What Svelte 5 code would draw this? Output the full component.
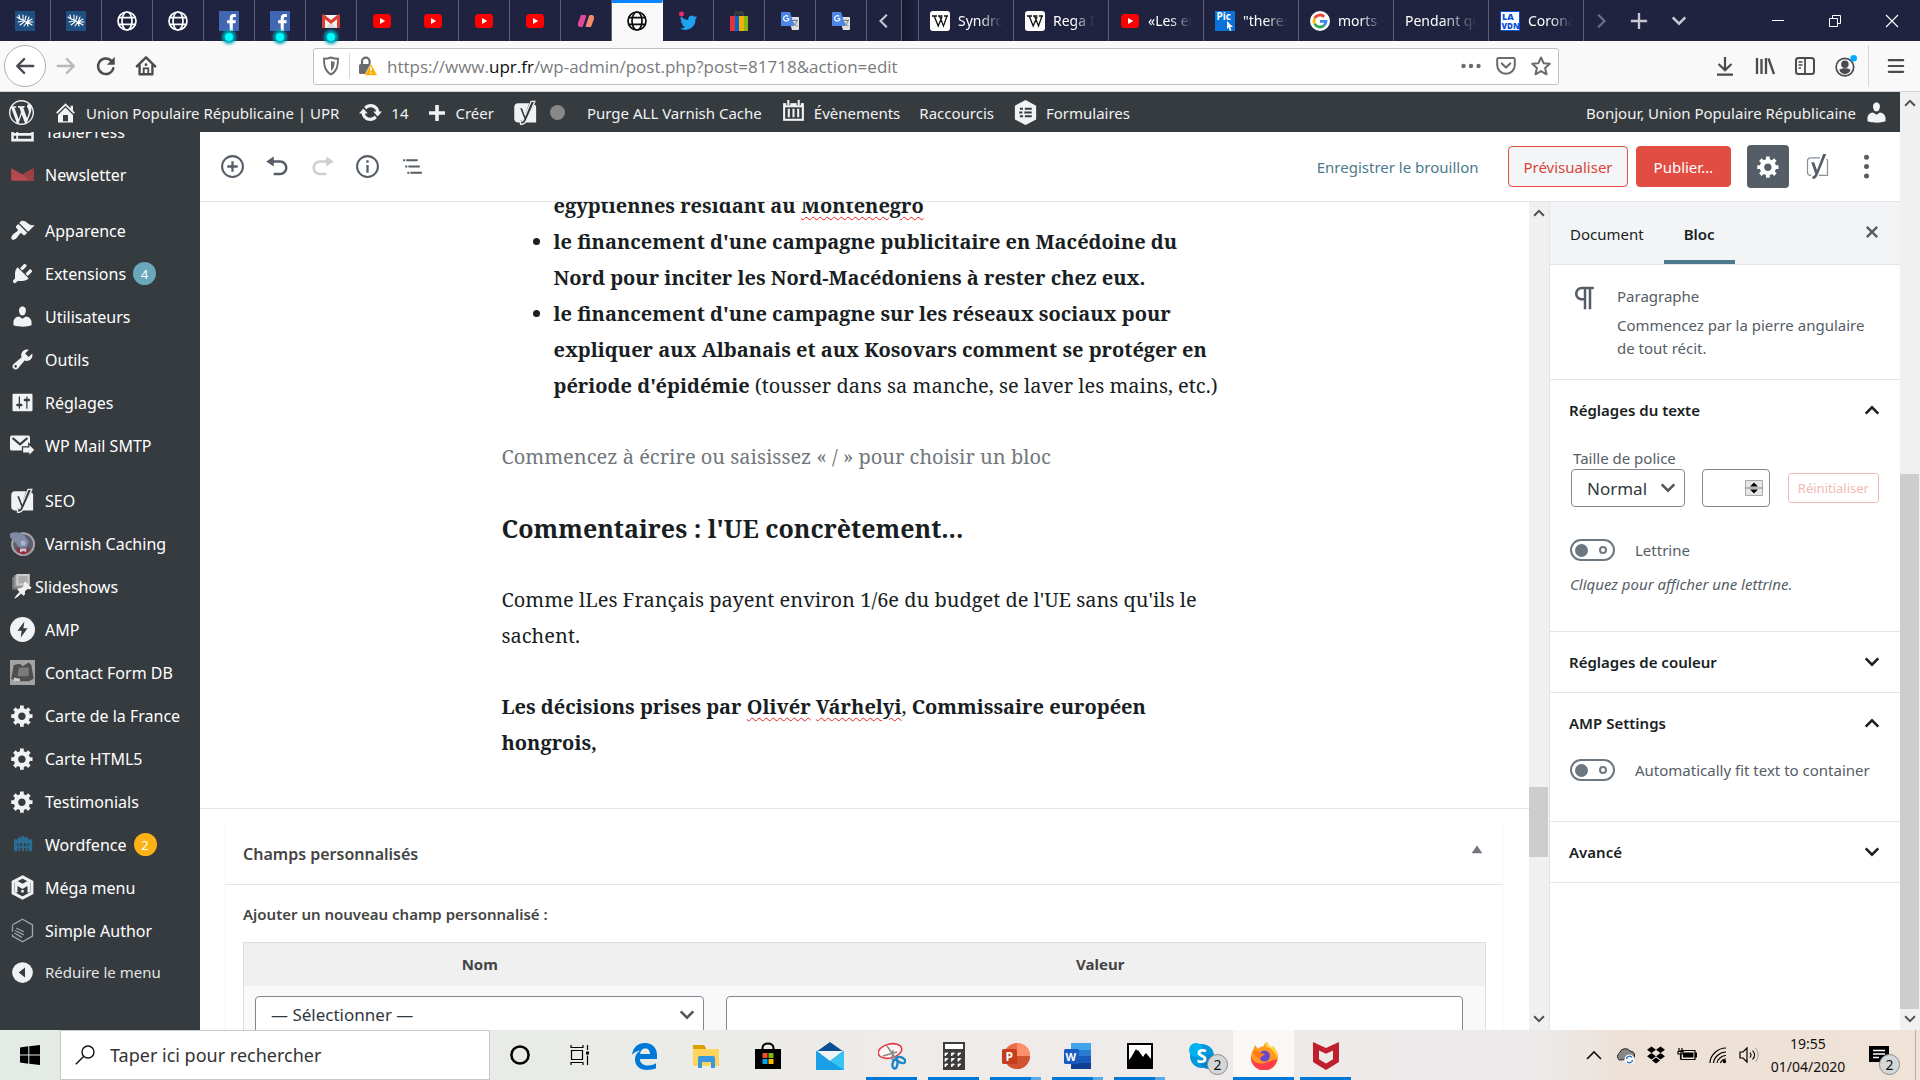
<script lang="ts">
  type Tab = { icon: string; title?: string; dot?: boolean };
  type MenuItem = { label: string; icon: string; count?: number; tone?: string; tight?: boolean };

  const pinnedTabs: Tab[] = [
    { icon: 'upr' },
    { icon: 'upr' },
    { icon: 'globe' },
    { icon: 'globe' },
    { icon: 'facebook', dot: true },
    { icon: 'facebook', dot: true },
    { icon: 'gmail', dot: true },
    { icon: 'youtube' },
    { icon: 'youtube' },
    { icon: 'youtube' },
    { icon: 'youtube' },
    { icon: 'ribbon' },
    { icon: 'globe' },
    { icon: 'twitter' },
    { icon: 'gift' },
    { icon: 'translate' },
    { icon: 'translate' }
  ];
  const activeTab = 12;

  const openTabs: Tab[] = [
    { icon: 'wikipedia', title: 'Syndro' },
    { icon: 'wikipedia', title: 'Rega I' },
    { icon: 'youtube', title: '«Les eu' },
    { icon: 'pic', title: '"theres' },
    { icon: 'google', title: 'morts c' },
    { icon: '', title: 'Pendant qu' },
    { icon: 'vdn', title: 'Corona' }
  ];

  const menuGroups: MenuItem[][] = [
    [
      { label: 'TablePress', icon: 'tablepress' },
      { label: 'Newsletter', icon: 'newsletter' }
    ],
    [
      { label: 'Apparence', icon: 'brush' },
      { label: 'Extensions', icon: 'plug', count: 4, tone: 'blue' },
      { label: 'Utilisateurs', icon: 'user' },
      { label: 'Outils', icon: 'wrench' },
      { label: 'Réglages', icon: 'sliders' },
      { label: 'WP Mail SMTP', icon: 'mailsmtp' }
    ],
    [
      { label: 'SEO', icon: 'yoast' },
      { label: 'Varnish Caching', icon: 'varnish' },
      { label: 'Slideshows', icon: 'slides', tight: true },
      { label: 'AMP', icon: 'amp' },
      { label: 'Contact Form DB', icon: 'cfdb' },
      { label: 'Carte de la France', icon: 'gear' },
      { label: 'Carte HTML5', icon: 'gear' },
      { label: 'Testimonials', icon: 'gear' },
      { label: 'Wordfence', icon: 'wordfence', count: 2, tone: 'orange' },
      { label: 'Méga menu', icon: 'mega' },
      { label: 'Simple Author', icon: 'author' }
    ]
  ];

  const apps = [
    { icon: 'edge', name: 'Edge' },
    { icon: 'folder', name: 'Explorateur' },
    { icon: 'store', name: 'Store' },
    { icon: 'mail', name: 'Courrier' },
    { icon: 'snip', name: 'Capture', state: 'open' },
    { icon: 'calc', name: 'Calculatrice', state: 'open' },
    { icon: 'ppt', name: 'PowerPoint', state: 'multi' },
    { icon: 'word', name: 'Word', state: 'multi' },
    { icon: 'photos', name: 'Photos', state: 'multi' },
    { icon: 'skype', name: 'Skype', badge: 2 },
    { icon: 'firefox', name: 'Firefox', state: 'focus' },
    { icon: 'mcafee', name: 'McAfee', state: 'open' }
  ];

  let dropCap = $state(false);
  let fitText = $state(false);
  let search = $state('');

  // viewBox first, then the shapes
  const icons: Record<string, [string, string]> = {
    upr: ['0 0 20 20', '<path fill="#1e4f80" d="M0 0h20v20H0z"/><path d="M2 6l3 2M4 4l1 4 3 1M3 11l5-1M8 4l0 5 3 2M5 14l4-3M11 5l-1 4M14 6l-2 5M17 8l-5 3M9 15l3-4M13 15l-1-4M17 14l-5-3M18 11l-6 0" stroke="#fff" stroke-width="1.1" stroke-linecap="round" fill="none"/>'],
    globe: ['0 0 20 20', '<g fill="none" stroke="currentColor" stroke-width="1.7"><circle cx="10" cy="10" r="9"/><ellipse cx="10" cy="10" rx="5" ry="9"/><path d="M1.5 6.6h17M1.5 13.4h17"/></g>'],
    facebook: ['0 0 20 20', '<path fill="#4267b2" d="M0 0h20v20H0z"/><path fill="#fff" d="M13.800 20v-7.700h2.600l.4-3h-3V7.400c0-.9.3-1.500 1.500-1.500h1.600V3.200c-.3 0-1.200-.1-2.300-.1-2.300 0-3.900 1.400-3.900 4v2.200H8.100v3h2.600V20z"/>'],
    gmail: ['0 0 20 20', '<path fill="#f2f2f2" d="M2 4h16v13H2z"/><path fill="#d9d9d9" d="M5 17l5-6 5 6z"/><path fill="#d93f35" d="M1 4.500C1 3.500 2 3 3 3.600l7 5.400 7-5.400c1-.6 2-.1 2 .9V17h-3V8.300L10 13 4 8.300V17H1z"/>'],
    youtube: ['0 0 20 20', '<rect x="1" y="3" width="18" height="14" rx="3.5" fill="#f00"/><path fill="#fff" d="M8 7l5.200 3L8 13z"/>'],
    ribbon: ['0 0 20 20', '<path fill="#e0489b" d="M5 4h4c1.500 0 1.500 1 1 2L7 15c-.4 1-1 1-2 1-3 0-3.500-2-2.800-4.500z"/><path fill="#f58a6d" d="M15 16h-4c-1.500 0-1.500-1-1-2l3-9c.4-1 1-1 2-1 3 0 3.500 2 2.800 4.500z"/>'],
    twitter: ['0 0 20 20', '<path fill="#1da1f2" d="M19 6a7 7 0 0 1-1.800.6A3.400 3.400 0 0 0 18.500 5a7 7 0 0 1-2.200.8 3.500 3.500 0 0 0-6 3.200A10 10 0 0 1 3.200 5.500a3.500 3.500 0 0 0 1 4.700 3.500 3.500 0 0 1-1.500-.4c0 1.700 1.200 3.100 2.800 3.500-.5.1-1 .1-1.500 0 .4 1.400 1.700 2.400 3.200 2.400A7 7 0 0 1 2 17.200 10 10 0 0 0 17.400 8.200 7 7 0 0 0 19 6z"/><circle cx="3.500" cy="3" r="2.5" fill="#f0286a"/>'],
    gift: ['0 0 20 20', '<path d="M6 5c0-5 3-5 4-1 1-4 4-4 4 1" fill="none" stroke="#3d3d3d" stroke-width="2.4"/><path fill="#e53238" d="M1 5h5v15H1z"/><path fill="#0064d2" d="M6 5h4v15H6z"/><path fill="#f5af02" d="M10 5h5v15h-5z"/><path fill="#86b817" d="M15 5h4v15h-4z"/>'],
    translate: ['0 0 20 20', '<path fill="#e0e0e0" d="M8 6h10c.6 0 1 .4 1 1v11c0 .6-.4 1-1 1h-6z"/><path fill="#4a86e8" d="M2 1h8l4.500 14H2c-.6 0-1-.4-1-1V2c0-.6.4-1 1-1z"/><path d="M9 7.500H6.500M9 7.500a2.700 2.700 0 1 1-.8-2" stroke="#fff" stroke-width="1.2" fill="none"/><path d="M12 9.500h6M15 8.500v1M13 15c2-1 3.500-3 4-5.500M13.500 11c.7 2 2 3.500 4 4" stroke="#6b7f86" fill="none"/>'],
    wikipedia: ['0 0 20 20', '<rect width="20" height="20" rx="3" fill="#fff"/><path d="M2 5h5M8 5h4.500M14 5h4M4.200 5l4 10L12 6M9.500 5l4 10L17 5" stroke="#111" stroke-width="1.3" fill="none"/>'],
    pic: ['0 0 20 20', '<path fill="#0a73d9" d="M0 0h20v20H0z"/><text x="1.5" y="9" font-size="10" font-weight="700" font-family="Open Sans" fill="#fff">Pic</text><path fill="#fff" d="M12 10l6 6h-3l1.500 3.300-1.500.7-1.500-3.400L12 18z"/>'],
    google: ['0 0 20 20', '<circle cx="10" cy="10" r="10" fill="#fff"/><g fill="none" stroke-width="2.8"><path stroke="#ea4335" d="M14.200 5.700A6 6 0 0 0 4.700 7.200"/><path stroke="#fbbc05" d="M4.700 7.200a6 6 0 0 0 0 5.600"/><path stroke="#34a853" d="M4.700 12.800a6 6 0 0 0 9.100 1.800"/><path stroke="#4285f4" d="M13.800 14.600A6 6 0 0 0 16 10.300h-6"/></g>'],
    vdn: ['0 0 20 20', '<path fill="#0b50d8" d="M0 0h20v20H0z"/><path fill="#fff" d="M1 1h18v18H1z"/><g font-family="Open Sans" font-weight="800" fill="#0b50d8"><text x="2" y="9" font-size="9">LA</text><text x="1.5" y="18" font-size="8">VDN</text></g>'],

    back: ['0 0 24 24', '<path d="M21 12H4M11 4.500L3.500 12l7.500 7.500" fill="none" stroke="currentColor" stroke-width="2.6" stroke-linecap="round" stroke-linejoin="round"/>'],
    forward: ['0 0 24 24', '<path d="M3 12h17M13 4.500l7.500 7.500-7.500 7.500" fill="none" stroke="currentColor" stroke-width="2.6" stroke-linecap="round" stroke-linejoin="round"/>'],
    reload: ['0 0 24 24', '<path d="M20 14.500a8.500 8.500 0 1 1-2.500-8.500L20 8.500" fill="none" stroke="currentColor" stroke-width="2.7" stroke-linecap="round"/><path fill="currentColor" d="M21.500 2v8.500H13z"/>'],
    home: ['0 0 24 24', '<path d="M2 12.500L12 2.500l10 10M5 11v10h14V11" fill="none" stroke="currentColor" stroke-width="2.6" stroke-linecap="round" stroke-linejoin="round"/><path d="M9.500 21v-6.500h5V21" fill="none" stroke="currentColor" stroke-width="2"/><circle cx="12" cy="10.500" r="1.5" fill="currentColor"/>'],
    shield: ['0 0 20 20', '<path d="M10 1.500c2.500 1 4.500 1.300 7 1.300 0 7-.8 12-7 15.700C3.800 14.800 3 9.800 3 2.800c2.500 0 4.500-.3 7-1.300z" fill="none" stroke="currentColor" stroke-width="1.9"/><path d="M10 5v10c2.800-2.300 3.600-5 3.700-9.200-1.500 0-2.500-.3-3.700-.8z" fill="currentColor"/>'],
    lock: ['0 0 20 20', '<path d="M4 9V5.500a3.800 3.800 0 0 1 7.600 0V9" fill="none" stroke="#6b6b6e" stroke-width="2.2"/><rect x="1" y="8" width="12" height="10" rx="1.5" fill="#6b6b6e"/><path d="M13 7.500l6.500 12H6.500z" fill="#ffae00" stroke="#fff" stroke-width=".6"/><path d="M13 11v4M13 16.500v1.200" stroke="#fff" stroke-width="1.5"/>'],
    dots: ['0 0 20 20', '<g fill="currentColor"><circle cx="2.500" cy="10" r="2.2"/><circle cx="10" cy="10" r="2.2"/><circle cx="17.500" cy="10" r="2.2"/></g>'],
    pocket: ['0 0 20 20', '<path d="M2.500 2h15c.8 0 1.300.5 1.300 1.300V9a8.800 8.800 0 0 1-17.600 0V3.300C1.200 2.500 1.700 2 2.500 2z" fill="none" stroke="currentColor" stroke-width="2"/><path d="M5.800 7.500l4.200 4 4.200-4" fill="none" stroke="currentColor" stroke-width="2.2" stroke-linecap="round" stroke-linejoin="round"/>'],
    star: ['0 0 20 20', '<path d="M10 1.500l2.600 5.700 6.200.6-4.700 4.200 1.400 6.300-5.500-3.200-5.500 3.200L5.900 12 1.200 7.800l6.200-.6z" fill="none" stroke="currentColor" stroke-width="2" stroke-linejoin="round"/>'],
    download: ['0 0 20 20', '<path d="M10 1v12.500M3.500 8l6.500 6.200L16.500 8M2 18.700h16" fill="none" stroke="currentColor" stroke-width="2.2"/>'],
    library: ['0 0 20 20', '<path d="M2 2v16M6.500 3v15M11 2v16M13.500 2.500L19 18" fill="none" stroke="currentColor" stroke-width="2.3"/>'],
    sidebar: ['0 0 20 20', '<rect x="1" y="2" width="18" height="16" rx="2.5" fill="none" stroke="currentColor" stroke-width="2"/><path d="M10 2v16" stroke="currentColor" stroke-width="1.8"/><path d="M3.500 6h4M3.500 9h4M3.500 12h2.500" stroke="currentColor" stroke-width="1.3"/>'],
    account: ['0 0 20 20', '<circle cx="9" cy="11" r="8" fill="none" stroke="currentColor" stroke-width="1.5"/><circle cx="9" cy="8.500" r="3.400" fill="currentColor"/><path d="M3.800 13.500c2-2 8.400-2 10.400 0-1 2.600-3.100 4-5.200 4s-4.200-1.400-5.200-4z" fill="currentColor"/><circle cx="17" cy="3" r="3" fill="#00aeff"/>'],
    menu: ['0 0 20 20', '<path d="M2 3.500h16M2 10h16M2 16.500h16" stroke="currentColor" stroke-width="2.4" stroke-linecap="round"/>'],

    wp: ['0 0 20 20', '<path fill="currentColor" d="M20 10c0-5.510-4.490-10-10-10C4.480 0 0 4.490 0 10c0 5.520 4.480 10 10 10 5.510 0 10-4.480 10-10zM7.780 15.370L4.370 6.220c.55-.02 1.170-.08 1.170-.08.5-.06.44-1.130-.06-1.110 0 0-1.450.11-2.370.11-.18 0-.37 0-.58-.01C4.120 2.690 6.870 1.110 10 1.110c2.330 0 4.450.87 6.050 2.340-.68-.11-1.650.39-1.650 1.580 0 .74.45 1.360.9 2.100.35.61.55 1.360.55 2.460 0 1.490-1.400 5-1.400 5l-3.030-8.370c.54-.02.82-.17.82-.17.5-.05.44-1.250-.06-1.220 0 0-1.440.12-2.380.12-.87 0-2.330-.12-2.330-.12-.5-.03-.56 1.200-.06 1.220l.92.08 1.260 3.410zM17.410 10c.24-.64.74-1.870.43-4.250.7 1.290 1.050 2.710 1.050 4.250 0 3.290-1.730 6.240-4.400 7.780.97-2.590 1.940-5.200 2.920-7.780zM6.100 18.090C3.120 16.650 1.110 13.530 1.110 10c0-1.300.23-2.480.72-3.590C3.250 10.300 4.670 14.200 6.100 18.090zm4.030-6.630l2.580 6.980c-.86.29-1.760.45-2.710.45-.79 0-1.570-.11-2.290-.33.81-2.380 1.620-4.740 2.420-7.100z"/>'],
    wphome: ['0 0 20 20', '<path fill="currentColor" d="M16 8.500l1.530 1.530-1.060 1.060L10 4.600l-6.470 6.490-1.060-1.060L10 2.500l4 4v-2h2v4zm-6-2.460l6 5.990V18H4v-5.970zM12 17v-5H8v5h4z"/>'],
    update: ['0 0 20 20', '<path fill="currentColor" d="M10.200 3.280c3.530 0 6.430 2.610 6.920 6h2.080l-3.500 4-3.500-4h2.320c-.45-1.970-2.210-3.450-4.320-3.450-1.450 0-2.730.71-3.540 1.780L4.950 5.660C6.230 4.200 8.110 3.280 10.200 3.280zm-.4 13.440c-3.520 0-6.430-2.610-6.920-6H.8l3.500-4c1.170 1.330 2.330 2.670 3.500 4H5.480c.45 1.970 2.210 3.450 4.320 3.450 1.450 0 2.730-.71 3.540-1.780l1.710 1.950c-1.280 1.460-3.150 2.380-5.250 2.380z"/>'],
    plus: ['0 0 20 20', '<path fill="currentColor" d="M18 8.200v3.600h-6.200V18H8.200v-6.200H2V8.200h6.200V2h3.600v6.200z"/>'],
    calendar: ['0 0 22 24', '<path fill="currentColor" d="M1 3h20v17H1z"/><path d="M3 7h16v11H3z" fill="#363b3f"/><path d="M6.500 8.500v8M11 8.500v8M15.500 8.500v8" stroke="currentColor" stroke-width="2"/><path d="M6 0v5M16 0v5" stroke="#363b3f" stroke-width="4"/><path d="M6 0v5M16 0v5" stroke="currentColor" stroke-width="2"/>'],
    forms: ['0 0 20 20', '<path fill="currentColor" d="M10 0l8.500 4.500v11L10 20l-8.500-4.500v-11z"/><path d="M5.500 7H8M9.500 7H15M5.500 13H8M9.500 13H15M5 10h2.500M9 10h6" stroke="#363b3f" stroke-width="1.6"/>'],
    yoast: ['0 0 20 20', '<path fill="currentColor" d="M4 2.500h9L9.500 12 7.500 6H5l3.500 8.500c-.3.9-.9 1.500-2.500 1.600V18H4c-1.700 0-3-1.300-3-3V5.500c0-1.700 1.300-3 3-3zM17 3.500c1 .5 1.500 1 1.500 2V18H9.500z"/><path fill="none" stroke="currentColor" stroke-width="1" d="M14.500 1h3L11 16c-1 2.500-2.500 3.600-5 3.500V17c1.500-.1 2.300-.8 2.600-2L5 6h2.600l2.300 6z"/>'],
    yoastline: ['0 0 20 20', '<path d="M12 3H4.500C3 3 2 4 2 5.500v9C2 16 3 17 4.500 17H5M17 4c.6.3 1 .8 1 1.500V17H11" fill="none" stroke="#8a9099"/><path fill="currentColor" d="M14.500 0h2.500l-6.500 15.800C9.500 18.500 8.300 20 6 20v-2.200c1.300-.2 1.900-1 2.200-2L5 6.500h2.300L9.600 13z"/>'],
    user: ['0 0 20 20', '<path fill="currentColor" d="M10 9.250c-2.270 0-2.730-3.440-2.730-3.440C7 4.020 7.820 2 9.970 2c2.160 0 2.980 2.020 2.710 3.810 0 0-.41 3.440-2.680 3.440zm0 2.570L12.720 10c2.390 0 4.520 2.330 4.520 4.530v2.490s-3.650 1.130-7.240 1.130c-3.650 0-7.240-1.130-7.240-1.130v-2.490c0-2.250 1.940-4.480 4.470-4.480z"/>'],

    tablepress: ['0 0 20 20', '<path fill="currentColor" d="M1 2h18v16H1z"/><path d="M3 5.500h2M6.500 5.500H17M3 10h2M6.500 10H17M3 14.500h2M6.500 14.500H17" stroke="#363b3f" stroke-width="2.4"/>'],
    newsletter: ['0 0 20 20', '<path fill="#b64b4f" d="M1 5l9 5 9-5v10H1z"/><path fill="#9c4045" d="M19 5v10h-3l-6-5z"/>'],
    brush: ['0 0 20 20', '<path fill="currentColor" d="M14.480 11.060L7.410 3.990l1.500-1.500c.5-.56 2.300-.47 3.510.32 1.210.8 1.430 1.280 2.910 2.100 1.180.64 2.450 1.260 4.450.85zm-.71.71L6.700 4.700 4.930 6.470c-.39.39-.39 1.020 0 1.410l1.060 1.060c.39.39.39 1.030 0 1.420-.6.6-1.430 1.110-2.210 1.690-.35.26-.7.53-1.010.84C1.430 14.230.4 16.080 1.400 17.070c.99 1 2.840-.03 4.180-1.360.31-.31.58-.66.85-1.020.57-.78 1.080-1.610 1.690-2.210.39-.39 1.020-.39 1.410 0l1.060 1.060c.39.39 1.020.39 1.410 0z"/>'],
    plug: ['0 0 20 20', '<path fill="currentColor" d="M13.110 4.360L9.870 7.600 8 5.730l3.240-3.240c.35-.34 1.050-.2 1.560.32.52.51.66 1.210.31 1.550zm-8 1.770l.91-1.120 9.010 9.010-1.190.84c-.71.71-2.630 1.160-3.820 1.160H6.140L4.900 17.260c-.59.59-1.540.59-2.120 0-.59-.58-.59-1.530 0-2.120l1.240-1.240v-3.880c0-1.130.4-3.190 1.090-3.890zm7.260 3.970l3.240-3.240c.34-.35 1.040-.21 1.550.31.52.51.66 1.210.31 1.550l-3.240 3.250z"/>'],
    wrench: ['0 0 20 20', '<path fill="currentColor" d="M16.680 9.770c-1.340 1.340-3.300 1.670-4.950.99l-5.410 6.520c-.99.99-2.590.99-3.580 0s-.99-2.590 0-3.570l6.520-5.420c-.68-1.650-.35-3.610.99-4.950 1.280-1.280 3.120-1.620 4.720-1.060l-2.890 2.890 2.820 2.820 2.860-2.870c.53 1.580.18 3.390-1.080 4.650zM3.810 16.210c.4.39 1.040.39 1.430 0 .4-.4.4-1.040 0-1.430-.39-.4-1.030-.4-1.430 0-.39.39-.39 1.030 0 1.430z"/>'],
    sliders: ['0 0 20 20', '<path fill="currentColor" d="M18 16V4c0-.55-.45-1-1-1H3c-.55 0-1 .45-1 1v12c0 .55.45 1 1 1h14c.55 0 1-.45 1-1zM8 11h1c.55 0 1 .45 1 1s-.45 1-1 1H8v1.500c0 .28-.22.5-.5.5s-.5-.22-.5-.5V13H6c-.55 0-1-.45-1-1s.45-1 1-1h1V5.500c0-.28.22-.5.5-.5s.5.22.5.5V11zm5-2h-1c-.55 0-1-.45-1-1s.45-1 1-1h1V5.500c0-.28.22-.5.5-.5s.5.22.5.5V7h1c.55 0 1 .45 1 1s-.45 1-1 1h-1v5.500c0 .28-.22.5-.5.5s-.5-.22-.5-.5V9z"/>'],
    mailsmtp: ['0 0 20 20', '<rect y="2" width="16" height="12" rx="1.5" fill="currentColor"/><path d="M2 4l6 5 6-5" fill="none" stroke="#363b3f" stroke-width="1.8"/><path fill="currentColor" stroke="#363b3f" stroke-width="1" d="M10 11h5V8.500l5 5-5 5V16h-5z"/>'],
    varnish: ['0 0 20 20', '<circle cx="10.500" cy="10.500" r="8.800" fill="#5d5f70" stroke="#a9a4aa" stroke-width="1.6"/><path fill="#7f8aa3" d="M0 2c4-2 9-1 12 2l3 5-2 4H7L4 9 0 5z"/><path fill="#8f2f3b" d="M5 13l4 1 2 1 5-2-1 4-4 2-5-2z"/><path fill="#c8c6d2" d="M8 14h5v3l-2-1-3 1z"/><circle cx="10.500" cy="9.500" r="2" fill="#a9b4cf"/>'],
    slides: ['0 0 20 24', '<path fill="#777" d="M0 3h12v12H0z"/><path fill="#999" d="M2 1h14v12H2z"/><path fill="#ccc" d="M4 0h13v11H4z"/><path fill="#aaa" d="M6 2h9v7H6z"/><path fill="#f1f1f1" transform="translate(1 6) scale(.95)" d="M10.440 3.020l1.820-1.820 6.360 6.350-1.830 1.820c-1.050-.68-2.480-.57-3.410.36l-.75.75c-.92.93-1.040 2.350-.35 3.410l-1.830 1.820-2.410-2.410-2.800 2.790c-.42.42-3.380 2.710-3.800 2.290s1.860-3.390 2.280-3.810l2.790-2.790L4.100 9.360l1.830-1.820c1.050.69 2.480.57 3.400-.36l.75-.75c.93-.92 1.050-2.350.36-3.410z"/>'],
    amp: ['0 0 20 20', '<circle cx="10" cy="10" r="10" fill="currentColor"/><path fill="#363b3f" d="M11.500 3.500L6 11h3.300l-.8 5.500L14 9h-3.300z"/>'],
    cfdb: ['0 0 20 20', '<path fill="#a3a3a3" d="M0 0h20v20H0z"/><path fill="#4d4d4d" d="M1 15L3 4l5-1 2 2 5-3 2 2 2 11-4 2H5z"/><path fill="#7a7a7a" d="M7 6h8v7H6z"/><path fill="#ccc" d="M3 14l5 1v2H3z"/>'],
    gear: ['0 0 20 20', '<path fill="currentColor" d="M18 12h-2.180c-.17.7-.44 1.350-.81 1.930l1.540 1.540-2.100 2.100-1.540-1.540c-.58.36-1.230.63-1.910.79V19H8v-2.180c-.68-.16-1.330-.43-1.910-.79l-1.540 1.540-2.120-2.120 1.540-1.540c-.36-.58-.63-1.230-.79-1.910H1V9.030h2.170c.16-.7.44-1.350.8-1.940L2.430 5.550l2.100-2.100 1.540 1.540c.58-.37 1.240-.64 1.930-.81V2h3v2.180c.68.16 1.330.43 1.910.79l1.540-1.540 2.120 2.120-1.540 1.540c.36.59.64 1.240.8 1.940H18V12zm-8.500 1.500c1.660 0 3-1.340 3-3s-1.340-3-3-3-3 1.340-3 3 1.340 3 3 3z"/>'],
    wordfence: ['-1 -1 21 22', '<g fill="#2b6d92"><path d="M2 6l1-1 1 1 2-2 1-1 1 1 1-1 1-1 1 1 1 1 1-1 1 1 2 2 1-1 1 1v3H2zM2 9h3v7H2zM15 9h3v7h-3zM6 8h1.500v8H6zM9.200 8h1.600v8H9.200zM12.500 8H14v8h-1.500z"/><path d="M2 11.500h16V13H2z"/></g>'],
    mega: ['0 0 20 20', '<path fill="none" stroke="currentColor" stroke-width="2.4" d="M10 1.500l7.500 4v9L10 18.500l-7.500-4v-9z"/><path fill="none" stroke="currentColor" stroke-width="2" d="M5 14V7l5 3 5-3v7M5 5.500L10 8l5-2.500M10 12v2"/>'],
    author: ['0 0 20 20', '<path fill="none" stroke="#a0a5aa" stroke-width="1.1" d="M2 5.500L10 1l8 4.500v9L10 19l-8-4.500V13M5 8l6 3M4 10l7 3.500M3.500 12l6 3.500M2 6v5"/>'],
    collapse: ['0 0 20 20', '<circle cx="10" cy="10" r="8.300" fill="currentColor"/><path fill="#363b3f" d="M12 6v8l-5-4z"/>'],

    insert: ['0 0 24 24', '<circle cx="12" cy="12" r="10" fill="none" stroke="currentColor" stroke-width="2"/><path d="M12 7v10M7 12h10" stroke="currentColor" stroke-width="2.2"/>'],
    undo: ['0 0 20 20', '<path fill="currentColor" d="M12 5H7V2L1 6l6 4V7h5c2.200 0 4 1.800 4 4s-1.800 4-4 4H7v2h5c3.300 0 6-2.700 6-6s-2.700-6-6-6z"/>'],
    redo: ['0 0 20 20', '<path fill="currentColor" d="M8 5h5V2l6 4-6 4V7H8c-2.200 0-4 1.800-4 4s1.800 4 4 4h5v2H8c-3.300 0-6-2.700-6-6s2.700-6 6-6z"/>'],
    info: ['0 0 24 24', '<circle cx="12" cy="12" r="10" fill="none" stroke="currentColor" stroke-width="2"/><path d="M12 10.500V18M12 6v2.300" stroke="currentColor" stroke-width="2.2"/>'],
    outline: ['0 0 24 24', '<path fill="currentColor" d="M5 5H3v2h2V5zm3 8h11v-2H8v2zm9-8H6v2h11V5zM7 11H5v2h2v-2zm0 8h2v-2H7v2zm3-2v2h11v-2H10z"/>'],
    kebab: ['0 0 20 20', '<g fill="currentColor"><circle cx="10" cy="2.500" r="2"/><circle cx="10" cy="10" r="2"/><circle cx="10" cy="17.500" r="2"/></g>'],
    pilcrow: ['0 0 24 24', '<path fill="currentColor" d="M11 5v7H9.500C7.600 12 6 10.400 6 8.500S7.600 5 9.500 5H11m8-2H9.500C6.500 3 4 5.500 4 8.500S6.500 14 9.500 14H11v7h2V5h2v16h2V5h2V3z"/>'],
    close: ['0 0 20 20', '<path d="M3.500 3.500l13 13M16.500 3.500l-13 13" stroke="currentColor" stroke-width="3"/>'],
    up: ['0 0 20 20', '<path d="M3 14l7-7 7 7" fill="none" stroke="currentColor" stroke-width="2.8"/>'],
    down: ['0 0 20 20', '<path d="M3 6l7 7 7-7" fill="none" stroke="currentColor" stroke-width="2.8"/>'],
    left: ['0 0 20 20', '<path d="M14 1l-9 9 9 9" fill="none" stroke="currentColor" stroke-width="3"/>'],
    right: ['0 0 20 20', '<path d="M6 1l9 9-9 9" fill="none" stroke="currentColor" stroke-width="3"/>'],
    newtab: ['0 0 20 20', '<path d="M10 1v18M1 10h18" stroke="currentColor" stroke-width="2.6"/>'],
    minimize: ['0 0 20 20', '<path d="M4 9.500h12" stroke="#fff"/>'],
    restore: ['0 0 20 20', '<path d="M4.500 7.500h8v8h-8zM7.500 7.500v-3h8v8h-3" fill="none" stroke="#fff"/>'],
    quit: ['0 0 20 20', '<path d="M4 4l12 12M16 4L4 16" stroke="#fff" stroke-width="1.1"/>'],

    windows: ['0 0 20 20', '<path fill="#000" d="M0 2.500l8.300-1.200v8.200H0zM9.300 1.200L20 0v9.500H9.300zM0 10.500h8.300v8.200L0 17.500zM9.300 10.500H20V20L9.300 18.800z"/>'],
    magnifier: ['0 0 20 20', '<circle cx="13" cy="7" r="6" fill="none" stroke="#111" stroke-width="1.4"/><path d="M8.600 11.400L.8 19.200" stroke="#111" stroke-width="1.4"/>'],
    cortana: ['0 0 20 20', '<circle cx="10" cy="10" r="7.800" fill="none" stroke="#000" stroke-width="2.3"/>'],
    taskview: ['0 0 20 20', '<path d="M1 0v2.500h12V0M1 20v-2.500h12V20M1.500 5.500h11v9h-11zM17.500 0v5M17.500 10.500V20" fill="none" stroke="#000" stroke-width="1.2"/><path d="M16 6.500h3v3h-3z"/>'],
    edge: ['0 0 28 28', '<path fill="#0078d7" d="M2 13C3 5 8 1 15 1c8 0 12 6 12 12v4H10c0 4 3 6.500 8 6.500 3 0 5.500-.7 8-2.200v5c-2.500 1.200-5.500 1.700-9 1.700C9.500 28 5 23.500 5 17.500 5 13 7.500 10 10.500 8.500 7 9 4 10.500 2 13zm8-1h10c0-3.500-1.800-5.500-4.800-5.500S10.500 8.500 10 12z"/>'],
    folder: ['0 0 28 28', '<path fill="#dca003" d="M1 3h11l2 3v4H1z"/><path fill="#ffd45c" d="M1 7h26v17H1z"/><path fill="#3b97de" d="M6 16c0-1.500.8-2 2-2h13c1.200 0 2 .5 2 2v10h-4v-6h-9v6H6z"/>'],
    store: ['0 0 28 28', '<path fill="#000" d="M1 7h26v20H1z"/><path d="M8.500 10V6c0-6 11-6 11 0v4" fill="none" stroke="#000" stroke-width="2"/><path fill="#f25022" d="M8.500 11h5v5h-5z"/><path fill="#7fba00" d="M14.500 11h5v5h-5z"/><path fill="#00a4ef" d="M8.500 17h5v5h-5z"/><path fill="#ffb900" d="M14.500 17h5v5h-5z"/>'],
    mail: ['0 0 28 28', '<path fill="#0b4f94" d="M0 10L14 0l14 10z"/><path fill="#1a9ee6" d="M0 9h28v19H0z"/><path fill="#f1f4f6" d="M1 9h26L14 19z"/><path fill="#38c4f2" d="M28 9v19L14 19z"/>'],
    snip: ['0 0 28 28', '<ellipse cx="12" cy="9" rx="12" ry="7" fill="#fdf5f5" stroke="#e33b45" stroke-width="1.6" transform="rotate(-14 12 9)"/><path d="M9 4l9 13M5 14l14-4M15 8l-1 10" stroke="#888" stroke-width="1.5"/><g fill="none" stroke="#1b86c8" stroke-width="2.4"><ellipse cx="17" cy="22" rx="2.400" ry="4.500" transform="rotate(10 17 22)"/><ellipse cx="23" cy="18" rx="4.500" ry="2.600" transform="rotate(25 23 18)"/></g>'],
    calc: ['0 0 28 28', '<path fill="#3f3d3b" d="M3 0h22v28H3z"/><path fill="#fff" d="M5 2h18v5H5z"/><path fill="#fff" d="M5 11h3l-3 3zM11.500 11h3l-3 3zM18 11h3l-3 3zM5 16.500h3l-3 3zM11.500 16.500h3l-3 3zM18 16.500h3l-3 3zM5 22h3l-3 3zM11.500 22h3l-3 3zM18 22h3l-3 3z" stroke="#fff" stroke-width=".8"/>'],
    ppt: ['0 0 28 28', '<circle cx="15" cy="14" r="13" fill="#ed6c47"/><path fill="#ff8f6b" d="M15 1a13 13 0 0 1 13 13H15z"/><path fill="#d35230" d="M28 14a13 13 0 0 1-24.300 6.500L15 14z"/><rect y="7" width="15" height="15" rx="1.5" fill="#c43e1c"/><text x="3.500" y="19" font-size="12" font-weight="700" font-family="Open Sans" fill="#fff">P</text>'],
    word: ['0 0 28 28', '<path fill="#41a5ee" d="M7 1h20v7H7z"/><path fill="#2b7cd3" d="M7 8h20v6H7z"/><path fill="#185abd" d="M7 14h20v7H7z"/><path fill="#103f91" d="M7 21h20v6H7z"/><rect y="7" width="15" height="15" rx="1.5" fill="#185abd"/><text x="1.500" y="18.500" font-size="11" font-weight="700" font-family="Open Sans" fill="#fff">W</text>'],
    photos: ['0 0 28 28', '<path fill="#000" d="M1 1h26v26H1z"/><path fill="#fff" d="M3 3h22v14l-5-6-3 4-5-7-9 10z"/><path fill="#000" d="M3 19l7-12 7 10 2-5 6 7v6H3z"/>'],
    skype: ['0 0 28 28', '<circle cx="14" cy="14" r="12" fill="#0098dd"/><circle cx="8" cy="8" r="7" fill="#00b2f0"/><circle cx="20" cy="20" r="7" fill="#0083d0"/><text x="8.500" y="21" font-size="19" font-weight="700" font-family="Open Sans" fill="#fff">S</text>'],
    firefox: ['0 0 28 28', '<path fill="#ff9a1f" d="M3 8l2-5 3 4c2-2 4-3 6-3 0-2 1-3 3-4 1 3 3 4 5 6l1-2c2 3 5 6 5 11a13 13 0 0 1-27 0c0-3 1-5 2-7z"/><path fill="#ff3d4d" d="M1 14c2 8 10 9 16 6 5-2 8-2 10-3a13 13 0 0 1-26-3z"/><path fill="#ffd93b" d="M17 0c1 3 3 4 5 6l1-2c2 3 5 6 4 12-2-6-6-10-10-11-2-1-2-3 0-5z"/><circle cx="14.500" cy="14" r="5.500" fill="#6b47d1"/><path fill="#ff7a1a" d="M3 9c3-1 6 0 8 2l4 1c-1 2-4 2-4 4-3 1-7-2-8-7z"/>'],
    mcafee: ['0 0 28 28', '<path fill="#c01f2e" d="M1 0l13 6 13-6v20l-13 8-13-8zM7 8.500v8.800l7 4.200 7-4.200V8.500l-7 3.300z" fill-rule="evenodd"/>'],
    cloud: ['0 0 20 20', '<path fill="#888" stroke="#222" d="M4.500 15a4 4 0 0 1 0-7 6 6 0 0 1 10.500-2 4.500 4.500 0 0 1 3 8z"/><circle cx="14.500" cy="14.500" r="5" fill="#fff"/><path d="M11.500 14a3 3 0 0 1 5.500-1.500M17.500 15a3 3 0 0 1-5.500 1.500" fill="none" stroke="#0a6ac8" stroke-width="1.3"/>'],
    dropbox: ['0 0 20 20', '<path fill="#000" d="M5.500 1.500L10 4.700 5.500 8 1 4.700zM14.500 1.500L19 4.700 14.500 8 10 4.700zM5.500 8L10 11.200 5.500 14.500 1 11.200zM14.500 8L19 11.200l-4.500 3.300-4.500-3.300zM10 12.500l4 3-4 3-4-3z"/>'],
    battery: ['0 0 20 20', '<path d="M4 5.500h14v9H4zM18.500 8h1v4h-1zM2 3v4M5 3v4M1 6.500h5V9H1zM3.500 9v5" fill="none" stroke="#000" stroke-width="1.2"/><path d="M6 7.500h10.500v5H6z"/>'],
    wifi: ['0 0 20 20', '<path d="M2 18C2 10 10 3 18 3M5.500 18C6 12 12 7 18 7M9 18c.5-4 5-7.500 9-7.500M12.500 18c.5-2 3-4 5.500-4" fill="none" stroke="#000" stroke-width="1.2"/><circle cx="16.500" cy="16.500" r="1.7"/>'],
    volume: ['0 0 20 20', '<path d="M1 7h3l4-4v14l-4-4H1z" fill="none" stroke="#000" stroke-width="1.2"/><path d="M11 7.500c1.200 1.500 1.200 3.500 0 5M13.500 5.500c2.500 2.700 2.500 6.300 0 9" fill="none" stroke="#000" stroke-width="1.1"/><path d="M16.500 3c3.500 4 3.500 10 0 14" fill="none" stroke="#999"/>'],
    action: ['0 0 20 20', '<path d="M0 1h20v16h-6v3l-4-3H0z"/><path d="M4 5.500h12M4 9h12M4 12.500h6" stroke="#fff" stroke-width="1.3"/>'],
    tri: ['0 0 20 20', '<path fill="currentColor" d="M10 4l9 13H1z"/>'],
    spin: ['0 0 18 16', '<path fill="#e6e6e6" stroke="#aaa" d="M.5.5h17v15H.5z"/><path d="M0 8h18" stroke="#888"/><path d="M9 2.500L13 6.500H5zM9 13.500L5 9.500h8z"/>']
  };
</script>

{#snippet icon(name: string, cls: string)}
  <svg class="icon {cls}" viewBox={icons[name][0]} aria-hidden="true">{@html icons[name][1]}</svg>
{/snippet}

<div class="screen">
  <header class="browser">
    <div class="tabs">
      {#each pinnedTabs as tab, i}
        <button class="tab pinned" class:active={i === activeTab} aria-label={tab.icon}>
          {@render icon(tab.icon, 's20')}
          {#if tab.dot}<span class="glow"></span>{/if}
        </button>
      {/each}
      <button class="tab scroller" aria-label="Défiler à gauche">{@render icon('left', 's14')}</button>
      <span class="tab sliver"></span>
      {#each openTabs as tab}
        <button class="tab titled">
          {#if tab.icon}{@render icon(tab.icon, 's20')}{/if}
          <span class="tab-title">{tab.title}</span>
        </button>
      {/each}
      <div class="tab-tools">
        <button class="dim" aria-label="Défiler à droite">{@render icon('right', 's14')}</button>
        <button aria-label="Nouvel onglet">{@render icon('newtab', 's18')}</button>
        <button aria-label="Liste des onglets">{@render icon('down', 's18')}</button>
      </div>
      <div class="window-tools">
        <button aria-label="Réduire">{@render icon('minimize', 's20')}</button>
        <button aria-label="Restaurer">{@render icon('restore', 's20')}</button>
        <button aria-label="Fermer">{@render icon('quit', 's20')}</button>
      </div>
    </div>

    <div class="navbar">
      <div class="nav-left">
        <button class="round" aria-label="Précédent">{@render icon('back', 's22')}</button>
        <button class="faded" aria-label="Suivant">{@render icon('forward', 's22')}</button>
        <button aria-label="Actualiser">{@render icon('reload', 's22')}</button>
        <button aria-label="Accueil">{@render icon('home', 's22')}</button>
      </div>
      <div class="urlbar">
        {@render icon('shield', 's20')}
        <span class="url-sep"></span>
        {@render icon('lock', 's20')}
        <a class="url" href="#top">https://www.<b>upr.fr</b>/wp-admin/post.php?post=81718&amp;action=edit</a>
        <button aria-label="Actions">{@render icon('dots', 's20')}</button>
        <button aria-label="Pocket">{@render icon('pocket', 's20')}</button>
        <button aria-label="Marque-page">{@render icon('star', 's20')}</button>
      </div>
      <div class="nav-right">
        <button aria-label="Téléchargements">{@render icon('download', 's20')}</button>
        <button aria-label="Bibliothèque">{@render icon('library', 's20')}</button>
        <button aria-label="Panneau latéral">{@render icon('sidebar', 's20')}</button>
        <button aria-label="Compte">{@render icon('account', 's22')}</button>
        <span class="nav-sep"></span>
        <button aria-label="Menu">{@render icon('menu', 's18')}</button>
      </div>
    </div>
  </header>

  <div class="viewport">
    <div class="page">
      <nav class="adminbar">
        <a href="#wp" aria-label="WordPress">{@render icon('wp', 's25')}</a>
        <a href="#site">{@render icon('wphome', 's25')}Union Populaire Républicaine | UPR</a>
        <a href="#updates">{@render icon('update', 's25')}14</a>
        <a href="#new">{@render icon('plus', 's20')}Créer</a>
        <a href="#yoast" aria-label="Yoast SEO" class="seo">{@render icon('yoast', 's25')}<span class="score"></span></a>
        <a href="#purge">Purge ALL Varnish Cache</a>
        <a href="#events">{@render icon('calendar', 's25')}Évènements</a>
        <a href="#short">Raccourcis</a>
        <a href="#forms">{@render icon('forms', 's25')}Formulaires</a>
        <a href="#me" class="me">Bonjour, Union Populaire Républicaine{@render icon('user', 's25')}</a>
      </nav>

      <div class="columns">
        <nav class="sidemenu">
          {#each menuGroups as group}
            <ul>
              {#each group as item}
                <li>
                  <a href="#{item.icon}" class:tight={item.tight}>
                    {@render icon(item.icon, 's25')}
                    {item.label}
                    {#if item.count}<span class="count {item.tone}">{item.count}</span>{/if}
                  </a>
                </li>
              {/each}
            </ul>
          {/each}
          <button class="collapse">{@render icon('collapse', 's25')}Réduire le menu</button>
        </nav>

        <main class="editor">
          <div class="toolbar">
            <div class="tools">
              <button aria-label="Ajouter un bloc">{@render icon('insert', 's25')}</button>
              <button aria-label="Annuler">{@render icon('undo', 's25')}</button>
              <button class="off" aria-label="Rétablir">{@render icon('redo', 's25')}</button>
              <button aria-label="Structure du contenu">{@render icon('info', 's25')}</button>
              <button aria-label="Navigation de bloc">{@render icon('outline', 's25')}</button>
            </div>
            <div class="actions">
              <button class="draft">Enregistrer le brouillon</button>
              <button class="preview">Prévisualiser</button>
              <button class="publish">Publier…</button>
              <button class="settings" aria-label="Réglages">{@render icon('gear', 's25')}</button>
              <button class="plain" aria-label="Yoast SEO">{@render icon('yoastline', 's25')}</button>
              <button class="plain" aria-label="Plus d’outils">{@render icon('kebab', 's25')}</button>
            </div>
          </div>

          <div class="workspace">
            <div class="canvas">
              <article class="post">
                <ul>
                  <li class="cut"><strong>égyptiennes résidant au <span class="typo">Montenegro</span></strong></li>
                  <li><strong>le financement d'une campagne publicitaire en Macédoine du<br />Nord pour inciter les Nord-Macédoniens à rester chez eux.</strong></li>
                  <li><strong>le financement d'une campagne sur les réseaux sociaux pour<br />expliquer aux Albanais et aux Kosovars comment se protéger en<br />période d'épidémie</strong> (tousser dans sa manche, se laver les mains, etc.)</li>
                </ul>
                <p class="placeholder">Commencez à écrire ou saisissez « / » pour choisir un bloc</p>
                <h3>Commentaires : l'UE concrètement...</h3>
                <p>Comme lLes Français payent environ 1/6e du budget de l'UE sans qu'ils le<br />sachent.</p>
                <p><strong>Les décisions prises par <span class="typo">Olivér</span> <span class="typo">Várhelyi</span></strong>, <strong>Commissaire européen<br />hongrois,</strong></p>
              </article>

              <section class="metaboxes">
                <div class="metabox">
                  <h2>Champs personnalisés <button aria-label="Replier">{@render icon('tri', 's12')}</button></h2>
                  <div class="inside">
                    <p>Ajouter un nouveau champ personnalisé :</p>
                    <table>
                      <thead>
                        <tr><th class="name"><label for="metakey">Nom</label></th><th><label for="metavalue">Valeur</label></th></tr>
                      </thead>
                      <tbody>
                        <tr>
                          <td>
                            <div class="select">
                              <select id="metakey"><option>— Sélectionner —</option></select>
                              {@render icon('down', 's18')}
                            </div>
                          </td>
                          <td class="value"><textarea id="metavalue" rows="2"></textarea></td>
                        </tr>
                      </tbody>
                    </table>
                  </div>
                </div>
              </section>
            </div>

            <div class="scrollbar inner">
              {@render icon('up', 's14')}
              <span class="before"></span><span class="thumb"></span><span class="after"></span>
              {@render icon('down', 's14')}
            </div>

            <aside class="panel">
              <div class="panel-tabs">
                <button>Document</button>
                <button class="current">Bloc</button>
                <button class="close" aria-label="Fermer les réglages">{@render icon('close', 's16')}</button>
              </div>
              <div class="card">
                {@render icon('pilcrow', 's30')}
                <div>
                  <h2>Paragraphe</h2>
                  <p>Commencez par la pierre angulaire<br />de tout récit.</p>
                </div>
              </div>
              <section>
                <h2><button>Réglages du texte {@render icon('up', 's18')}</button></h2>
                <div class="text-settings">
                  <label class="field-label" for="font-size">Taille de police</label>
                  <div class="font-row">
                    <div class="select size">
                      <select id="font-size"><option>Normal</option></select>
                      {@render icon('down', 's18')}
                    </div>
                    <div class="number">
                      <input type="number" aria-label="Taille personnalisée" />
                      {@render icon('spin', 'spin')}
                    </div>
                    <button class="reset" disabled>Réinitialiser</button>
                  </div>
                  <label class="toggle">
                    <input type="checkbox" bind:checked={dropCap} />
                    <span class="switch"></span>Lettrine
                  </label>
                  <p class="help">Cliquez pour afficher une lettrine.</p>
                </div>
              </section>
              <section>
                <h2><button>Réglages de couleur {@render icon('down', 's18')}</button></h2>
              </section>
              <section>
                <h2><button>AMP Settings {@render icon('up', 's18')}</button></h2>
                <div class="amp-settings">
                  <label class="toggle">
                    <input type="checkbox" bind:checked={fitText} />
                    <span class="switch"></span>Automatically fit text to container
                  </label>
                </div>
              </section>
              <section>
                <h2><button>Avancé {@render icon('down', 's18')}</button></h2>
              </section>
            </aside>
          </div>
        </main>
      </div>
    </div>

    <div class="scrollbar outer">
      {@render icon('up', 's14')}
      <span class="before"></span><span class="thumb"></span><span class="after"></span>
      {@render icon('down', 's14')}
    </div>
  </div>

  <footer class="taskbar">
    <button class="start" aria-label="Démarrer">{@render icon('windows', 's20')}</button>
    <div class="search">
      {@render icon('magnifier', 's20')}
      <input type="text" aria-label="Rechercher" placeholder="Taper ici pour rechercher" bind:value={search} />
    </div>
    <button class="sys" aria-label="Cortana">{@render icon('cortana', 's22')}</button>
    <button class="sys" aria-label="Affichage des tâches">{@render icon('taskview', 's20')}</button>
    {#each apps as app}
      <button class="app {app.state ?? ''}" aria-label={app.name}>
        {@render icon(app.icon, 's28')}
        {#if app.badge}<span class="badge">{app.badge}</span>{/if}
      </button>
    {/each}
    <div class="tray">
      <button aria-label="Icônes cachées">{@render icon('up', 's20 thin')}</button>
      {@render icon('cloud', 's20')}
      {@render icon('dropbox', 's20')}
      {@render icon('battery', 's20')}
      {@render icon('wifi', 's20')}
      {@render icon('volume', 's20')}
      <div class="clock"><span>19:55</span><span>01/04/2020</span></div>
      <button class="center" aria-label="Centre de notifications">
        {@render icon('action', 's20')}
        <span class="badge">2</span>
      </button>
      <span class="desktop"></span>
    </div>
  </footer>
</div>

<style>
  :global(body) {
    margin: 0;
    overflow: hidden;
  }

  .screen {
    display: flex;
    flex-direction: column;
    height: 100vh;
    font-family: 'Noto Sans', 'Open Sans', sans-serif;
    font-size: 15px;
    color: #191e23;
    background: #fff;
  }

  .screen * {
    box-sizing: border-box;
  }

  button {
    display: flex;
    align-items: center;
    justify-content: center;
    margin: 0;
    padding: 0;
    border: 0;
    background: none;
    font: inherit;
    color: inherit;
    white-space: nowrap;
  }

  a {
    color: inherit;
    text-decoration: none;
    white-space: nowrap;
  }

  h2, h3, p, ul {
    margin: 0;
    padding: 0;
  }

  input, select, textarea {
    margin: 0;
    font: inherit;
    color: inherit;
  }

  .icon {
    display: block;
    flex: none;
  }

  .s12 { width: 12px; height: 12px; }
  .s14 { width: 14px; height: 14px; }
  .s16 { width: 16px; height: 16px; }
  .s18 { width: 18px; height: 18px; }
  .s20 { width: 20px; height: 20px; }
  .s22 { width: 22px; height: 22px; }
  .s25 { width: 25px; height: 25px; }
  .s28 { width: 28px; height: 28px; }
  .s30 { width: 30px; height: 30px; }

  /* browser chrome */
  .tabs {
    display: flex;
    height: 41px;
    background: #202340;
    color: #fff;
  }

  .tab {
    position: relative;
    flex: none;
    border-right: 1px solid #5c5e74;
  }

  .pinned {
    width: 51px;
  }

  .active {
    border-top: 3px solid #0a84ff;
    border-right-color: #f9f9fa;
    padding-bottom: 3px;
    background: #f9f9fa;
    color: #0c0c0d;
  }

  .glow {
    position: absolute;
    left: 21px;
    bottom: 0;
    width: 8px;
    height: 8px;
    border-radius: 50%;
    background: #00feff;
    box-shadow: 0 0 3px 3px #00a3b4;
  }

  .scroller {
    width: 35px;
    color: #c7c8d0;
  }

  .sliver {
    width: 17px;
    background: linear-gradient(90deg, #15172b, #202340);
  }

  .titled {
    width: 95px;
    justify-content: flex-start;
    gap: 8px;
    padding: 0 11px;
  }

  .tab-title {
    overflow: hidden;
    font-size: 14px;
    mask-image: linear-gradient(90deg, #000 50%, transparent);
  }

  .tab-tools {
    display: flex;
    align-items: center;
    gap: 22px;
    padding-left: 10px;
    color: #c7c8d0;
  }

  .dim {
    color: #6d6f84;
  }

  .window-tools {
    display: flex;
    align-items: center;
    gap: 37px;
    margin-left: auto;
    padding-right: 18px;
  }

  .navbar {
    display: flex;
    align-items: center;
    height: 51px;
    border-bottom: 1px solid #d5d5d8;
    background: #f9f9fa;
    color: #4a4a4f;
  }

  .nav-left {
    display: flex;
    align-items: center;
    flex: none;
    gap: 18px;
    width: 313px;
    padding-left: 4px;
  }

  .round {
    width: 42px;
    height: 42px;
    margin-right: -9px;
    border: 1px solid #b1b1b3;
    border-radius: 50%;
    background: #fff;
  }

  .faded {
    color: #b9b9bc;
  }

  .urlbar {
    display: flex;
    align-items: center;
    flex: 1;
    gap: 15px;
    height: 37px;
    padding: 0 7px;
    border: 1px solid #c1c1c4;
    border-radius: 3px;
    background: #fff;
    color: #6b6b6e;
  }

  .url-sep {
    width: 1px;
    height: 26px;
    margin: 0 -7px;
    background: #d7d7db;
  }

  .url {
    flex: 1;
    margin-left: -6px;
    padding-top: 1px;
    font-family: 'Open Sans', 'Noto Sans', sans-serif;
    font-size: 17px;
    color: #7a7a7d;
  }

  .url b {
    font-weight: 400;
    color: #0c0c0d;
  }

  .nav-right {
    display: flex;
    align-items: center;
    justify-content: flex-end;
    flex: none;
    gap: 20px;
    width: 361px;
    padding-right: 15px;
  }

  .nav-sep {
    width: 1px;
    height: 42px;
    margin: 0 -2px 0 -9px;
    background: #d7d7db;
  }

  /* wordpress page */
  .viewport {
    display: flex;
    flex: 1;
    min-height: 0;
  }

  .page {
    display: flex;
    flex: 1;
    flex-direction: column;
    min-width: 0;
  }

  .adminbar {
    display: flex;
    align-items: center;
    flex: none;
    gap: 19px;
    height: 40px;
    padding: 1px 11px 0 9px;
    background: #363b3f;
    color: #f1f2f3;
  }

  .adminbar a {
    display: flex;
    align-items: center;
    gap: 8px;
  }

  .seo {
    margin-right: 3px;
  }

  .score {
    width: 15px;
    height: 15px;
    margin-left: 4px;
    border-radius: 50%;
    background: #888;
  }

  .adminbar .me {
    margin-left: auto;
  }

  .columns {
    display: flex;
    flex: 1;
    min-height: 0;
  }

  .sidemenu {
    flex: none;
    width: 200px;
    overflow: hidden;
    background: #363b3f;
    color: #fff;
    font-size: 16px;
  }

  .sidemenu ul {
    margin-bottom: 12px;
    list-style: none;
  }

  .sidemenu ul:first-child {
    margin: -22px 0 13px;
  }

  .sidemenu ul:last-of-type {
    margin-bottom: 0;
  }

  .sidemenu li a,
  .collapse {
    display: flex;
    align-items: center;
    gap: 10px;
    height: 43px;
    padding-left: 10px;
  }

  .sidemenu .icon,
  .adminbar .icon {
    color: #f1f2f3;
  }

  .sidemenu a.tight {
    gap: 0;
  }

  .collapse {
    height: 40px;
    font-size: 15px;
    color: #e3e4e5;
  }

  .count {
    display: flex;
    align-items: center;
    justify-content: center;
    width: 23px;
    height: 23px;
    margin-left: -3px;
    border-radius: 50%;
    font-size: 13px;
  }

  .blue {
    background: #69a8bb;
  }

  .orange {
    background: #fcb214;
  }

  .editor {
    display: flex;
    flex: 1;
    flex-direction: column;
    min-width: 0;
  }

  .toolbar {
    display: flex;
    align-items: center;
    justify-content: space-between;
    flex: none;
    height: 70px;
    padding: 0 21px 0 20px;
    border-bottom: 1px solid #e2e4e7;
    color: #555d66;
  }

  .tools,
  .actions {
    display: flex;
    align-items: center;
    gap: 20px;
  }

  .off {
    color: #ccced1;
  }

  .actions {
    gap: 8px;
  }

  .draft {
    margin-right: 22px;
    color: #4a7a8c;
  }

  .preview,
  .publish {
    height: 41px;
    padding: 0 14px;
    border: 1px solid #e14d43;
    border-radius: 4px;
    background: #f3f5f6;
    color: #d8453b;
  }

  .publish {
    padding: 0 17px;
    background: #e14d43;
    color: #fff;
  }

  .settings {
    width: 42px;
    height: 43px;
    margin-left: 8px;
    border-radius: 4px;
    background: #555d66;
    color: #fff;
  }

  .plain {
    margin-left: 8px;
  }

  .plain:last-child {
    margin-left: 16px;
  }

  .workspace {
    display: flex;
    flex: 1;
    min-height: 0;
  }

  .canvas {
    display: flex;
    flex: 1;
    flex-direction: column;
    min-width: 0;
    overflow: hidden;
  }

  .post {
    width: 100%;
    max-width: 726px;
    margin: -14px auto 0;
    padding-bottom: 47px;
    font-family: 'Noto Serif', 'DejaVu Serif Condensed', 'DejaVu Serif', serif;
    font-size: 20px;
    line-height: 36px;
    white-space: nowrap;
  }

  .post ul {
    padding-left: 52px;
  }

  .post .cut {
    list-style: none;
  }

  .post p,
  .post h3 {
    margin-top: 35px;
  }

  .post h3 {
    font-size: 25px;
    line-height: 37px;
  }

  .placeholder {
    color: #72777c;
  }

  .typo {
    text-decoration: underline wavy #e22 1px;
    text-underline-offset: 3px;
  }

  .metaboxes {
    padding: 14px 25px 0 24px;
    border-top: 1px solid #e2e4e7;
    color: #444;
  }

  .metabox {
    border: 1px solid #fafafa;
    border-width: 0 1px;
  }

  .metabox h2 {
    display: flex;
    align-items: center;
    justify-content: space-between;
    height: 62px;
    padding: 0 20px 0 18px;
    border-bottom: 1px solid #e2e4e7;
    font-size: 16px;
    font-weight: 600;
  }

  .metabox h2 button {
    padding-bottom: 10px;
    color: #72777c;
  }

  .inside {
    padding: 0 17px 0 18px;
  }

  .inside p {
    padding: 18px 0 17px;
    font-size: 15px;
    font-weight: 600;
    line-height: 22px;
  }

  table {
    width: 100%;
    border: 1px solid #ddd;
    border-collapse: collapse;
    background: #f9f9f9;
  }

  th {
    height: 43px;
    padding: 0;
    background: #f0f0f0;
    font-weight: 700;
  }

  .name {
    width: 38%;
  }

  td {
    padding: 10px 11px;
    vertical-align: top;
  }

  .value {
    padding-right: 22px;
  }

  textarea {
    display: block;
    width: 100%;
    height: 60px;
    border: 1px solid #7e8993;
    border-radius: 4px;
    background: #fff;
    resize: none;
  }

  .select {
    display: grid;
    align-items: center;
    color: #32373c;
  }

  .select select {
    grid-area: 1 / 1;
    width: 100%;
    height: 38px;
    padding: 0 15px;
    border: 1px solid #7e8993;
    border-radius: 4px;
    background: #fff;
    font-size: 17px;
    appearance: none;
  }

  .select .icon {
    grid-area: 1 / 1;
    justify-self: end;
    margin-right: 8px;
    color: #555;
    pointer-events: none;
  }

  /* scrollbars */
  .scrollbar {
    display: flex;
    flex: none;
    flex-direction: column;
    align-items: center;
    width: 20px;
    padding: 4px 0;
    background: #f0f0f0;
    color: #505050;
  }

  .thumb {
    align-self: stretch;
    margin-right: 1px;
    background: #cdcdcd;
  }

  .inner .before { flex: 567; }
  .inner .thumb { flex: 70; }
  .inner .after { flex: 155; }
  .outer .before { flex: 364; }
  .outer .thumb { flex: 535; }
  .outer .after { flex: 3; }

  /* block settings */
  .panel {
    flex: none;
    width: 351px;
    border-left: 1px solid #e2e4e7;
    color: #555d66;
  }

  .panel-tabs {
    display: flex;
    height: 63px;
    border-bottom: 1px solid #e2e4e7;
    background: #f3f4f5;
    color: #191e23;
  }

  .panel-tabs button {
    padding: 2px 20px 0;
  }

  .panel-tabs .current {
    padding-top: 6px;
    border-bottom: 4px solid #4a7a8c;
    font-weight: 600;
  }

  .panel-tabs .close {
    margin-left: auto;
    padding: 0 20px 2px;
    color: #555d66;
  }

  .card {
    display: flex;
    gap: 17px;
    padding: 18px 20px;
    border-bottom: 1px solid #e2e4e7;
  }

  .card h2 {
    margin-bottom: 5px;
    font-size: 15px;
    font-weight: 400;
    line-height: 26px;
  }

  .card p {
    margin-bottom: 1px;
    line-height: 23px;
    white-space: nowrap;
  }

  .panel section {
    border-bottom: 1px solid #e2e4e7;
  }

  .panel section h2 {
    font-size: 15px;
    font-weight: 600;
    color: #191e23;
  }

  .panel section h2 button {
    justify-content: space-between;
    width: 100%;
    height: 60px;
    padding: 0 19px;
  }

  .text-settings {
    padding: 7px 20px 35px;
  }

  .field-label {
    display: block;
    padding-left: 3px;
    line-height: 22px;
  }

  .font-row {
    display: flex;
    align-items: center;
    justify-content: space-between;
    padding: 0 1px;
  }

  .size {
    width: 114px;
  }

  .number {
    display: grid;
    align-items: center;
    width: 68px;
  }

  .number input {
    grid-area: 1 / 1;
    width: 100%;
    height: 38px;
    border: 1px solid #7e8993;
    border-radius: 4px;
    appearance: textfield;
  }

  .number :global(.spin) {
    grid-area: 1 / 1;
    justify-self: end;
    width: 18px;
    height: 16px;
    margin-right: 7px;
  }

  .reset {
    height: 30px;
    padding: 0 9px;
    border: 1px solid #f3b8b4;
    border-radius: 3px;
    font-size: 13px;
    color: #f3b8b4;
  }

  .toggle {
    display: flex;
    align-items: center;
    gap: 20px;
    height: 24px;
    white-space: nowrap;
  }

  .font-row + .toggle {
    margin-top: 31px;
  }

  .toggle input {
    position: absolute;
    opacity: 0;
  }

  .switch {
    display: flex;
    align-items: center;
    justify-content: space-between;
    width: 45px;
    height: 22px;
    padding: 0 6px 0 3px;
    border: 2px solid #6c7781;
    border-radius: 11px;
  }

  .switch::before {
    width: 13px;
    height: 13px;
    border-radius: 50%;
    background: #6c7781;
    content: '';
  }

  .switch::after {
    width: 4px;
    height: 4px;
    border: 2px solid #6c7781;
    border-radius: 50%;
    content: '';
  }

  .help {
    margin-top: 11px;
    font-style: italic;
    line-height: 23px;
  }

  .amp-settings {
    padding: 5px 20px 39px;
  }

  /* taskbar */
  .taskbar {
    display: flex;
    flex: none;
    height: 50px;
    background: linear-gradient(90deg, #e3ebe4, #e9ebe6 30%, #efebe9 50%, #eceaea 80%, #ede0d5 85%, #efe2d6);
    color: #111;
  }

  .start {
    width: 60px;
  }

  .search {
    display: flex;
    align-items: center;
    gap: 13px;
    width: 430px;
    padding-left: 14px;
    border: 1px solid #c8c8c8;
    background: #fff;
  }

  .search input {
    flex: 1;
    min-width: 0;
    border: 0;
    background: none;
    font-size: 18px;
  }

  .search input::placeholder {
    color: #333;
    opacity: 1;
  }

  .sys {
    width: 60px;
  }

  .app {
    position: relative;
    width: 61px;
    margin: 0 1px 0 0;
    padding-top: 2px;
  }

  .sys + .app {
    margin-left: 3px;
  }

  .app::after {
    position: absolute;
    right: 5px;
    bottom: 0;
    left: 5px;
    height: 3px;
    content: '';
  }

  .open::after,
  .focus::after {
    background: #0078d7;
  }

  .multi::after {
    background: linear-gradient(90deg, #0078d7 80%, #5ba9e5 80%);
  }

  .focus {
    background: #f9f8f7;
  }

  .focus::after {
    right: 0;
    left: 0;
  }

  .badge {
    position: absolute;
    right: 4px;
    bottom: 5px;
    width: 21px;
    height: 21px;
    border: 1px solid #8a8a8a;
    border-radius: 50%;
    background: #d5d8d9;
    font-size: 14px;
    line-height: 19px;
    text-align: center;
  }

  .tray {
    display: flex;
    align-items: center;
    gap: 11px;
    margin-left: auto;
    padding-right: 4px;
  }

  .tray :global(.thin path) {
    stroke-width: 1.6;
  }

  .clock {
    display: flex;
    flex-direction: column;
    align-items: center;
    width: 76px;
    margin-right: -3px;
    padding-bottom: 1px;
    font-size: 14px;
    line-height: 23px;
  }

  .center {
    position: relative;
    width: 50px;
    height: 50px;
  }

  .desktop {
    width: 1px;
    height: 50px;
    background: #b5aca5;
  }
</style>
